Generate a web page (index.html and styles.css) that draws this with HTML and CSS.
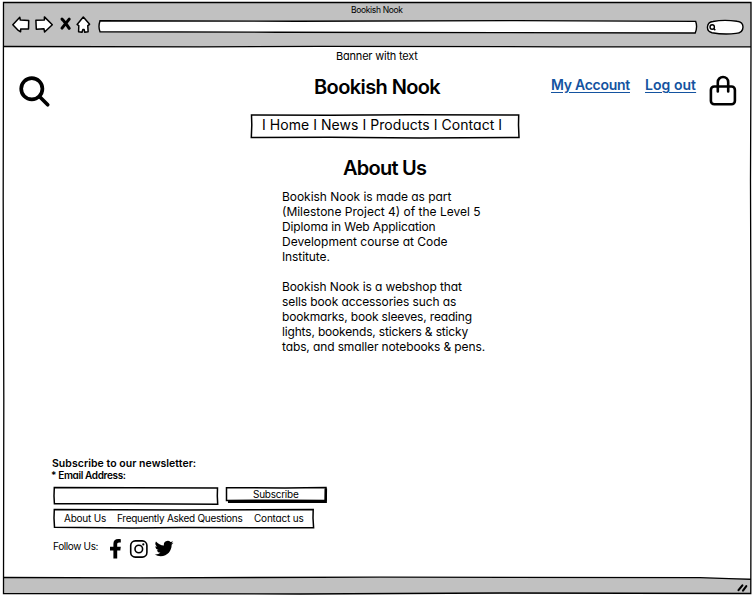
FILE: index.html
```html
<!DOCTYPE html>
<html lang="en">
<head>
<meta charset="utf-8">
<title>Bookish Nook</title>
<link rel="stylesheet" href="styles.css">
</head>
<body>
<div class="window">
  <svg class="frame" viewBox="0 0 756 600" fill="none" stroke="#000" stroke-width="1.3">
    <path d="M3.5 2.5L751 2.5L751 50L750.5 180L751.2 400L750.8 593.5L500 593L300 594L3.5 593.5L3.8 400L3.2 200Z"/>
    <path d="M3 46.5L200 46.8L320 46.3L560 46.8L751 46.8"/>
    <path d="M3 577.5L140 577.8L380 577.2L700 577.7L751 579.3"/>
  </svg>
  <header class="chrome">
    <div class="window-title"><span class="t-title">Bookish Nook</span></div>
    <div class="toolbar">
      <svg class="nav-icons" viewBox="0 0 80 20" width="80" height="20" fill="#fff" stroke="#000" stroke-width="1.5" stroke-linejoin="round">
        <path d="M.8 9.7L7.8 2.3L8.3 5L16.7 5.4L16.5 13.9L8.7 13.9L8.6 16.8L5.6 14.8Z"/>
        <path d="M23.9 5.3L32.4 5L32.4 1.9L40.3 9.7L32.6 17L32 13.8L24.3 14.2Z"/>
        <path d="M50 4.1Q53 7 57.2 13.3M57.2 4.1L50 13.1" stroke-width="3" stroke-linecap="round"/>
        <path d="M65.1 9.4L71.3 2L77.6 9.3L75.8 10.7L76.1 16.8L72.8 17.3L72.1 14.5L70.8 14.6L70 17.3L66.6 16.8L66.8 10.7Z"/>
      </svg>
      <svg class="address" viewBox="0 0 602 15" width="602" height="15" fill="#fff" stroke="#000" stroke-width="1.4">
        <path d="M3 1.7L200 2.2L420 1.6L598.7 2.4Q600.7 8 598.2 14L400 13.6L180 13.2L3 12.7Q1 8 3 1.7Z"/>
      </svg>
      <svg class="find" viewBox="0 0 38 17" width="38" height="17" fill="#fff" stroke="#000" stroke-width="1.4">
        <path d="M7 2.5Q18 .3 31 2.3Q37 3 37 8Q37 14 30 14.4Q18 16 6 13.7Q1 12.5 1.5 7.7Q2 3 7 2.5Z"/>
        <circle cx="6.2" cy="8" r="2.2"/><path d="M7.7 9.5L9.3 11.3"/>
      </svg>
    </div>
  </header>
  <main class="page">
    <p class="banner"><span class="t-banner">Banner with text</span></p>
    <div class="masthead">
      <svg class="search" viewBox="0 0 34 34" width="34" height="34" fill="none" stroke="#000" stroke-width="3.7" stroke-linecap="round">
        <circle cx="13.8" cy="13.8" r="10.6"/><path d="M21.7 21.8L29.7 29.7"/>
      </svg>
      <h1><span class="t-h1">Bookish Nook</span></h1>
      <div class="account">
        <a class="t-account">My Account</a>
        <a class="t-logout">Log out</a>
      </div>
      <svg class="bag" viewBox="0 0 28 32" width="28" height="32" fill="none" stroke="#000" stroke-width="2.6" stroke-linecap="round" stroke-linejoin="round">
        <rect x="1.9" y="11.5" width="24" height="17.8" rx="3.4"/>
        <path d="M8.8 16.5V7.2A5.2 5.2 0 0 1 19.2 7.2V16.5"/>
      </svg>
    </div>
    <nav class="menu sketch">
      <svg viewBox="0 0 270 26" preserveAspectRatio="none"><path d="M1.5 2L80 2.3L160 1.8L268.7 2L268.5 12L269 24.5L170 25L80 24.3L1.3 24.6L1.8 12Z"/></svg>
      <span class="t-menu">I Home I News I Products I Contact I</span>
    </nav>
    <h2><span class="t-h2">About Us</span></h2>
    <article class="about">
      <p><span class="l1">Bookish Nook is made as part</span>
      <span class="l2">(Milestone Project 4) of the Level 5</span>
      <span class="l3">Diploma in Web Application</span>
      <span class="l4">Development course at Code</span>
      <span class="l5">Institute.</span></p>
      <p><span class="l6">Bookish Nook is a webshop that</span>
      <span class="l7">sells book accessories such as</span>
      <span class="l8">bookmarks, book sleeves, reading</span>
      <span class="l9">lights, bookends, stickers &amp; sticky</span>
      <span class="l10">tabs, and smaller notebooks &amp; pens.</span></p>
    </article>
    <section class="newsletter">
      <div class="news-title"><span class="t-news">Subscribe to our newsletter:</span></div>
      <div class="news-label"><span class="t-email">* Email Address:</span></div>
      <div class="signup">
        <div class="field sketch"><svg viewBox="0 0 166 20" preserveAspectRatio="none"><path d="M1.3 1.6L80 1.8L164.5 2L164.3 10L164.7 18.3L80 17.8L1.4 17.7L1 10Z"/></svg></div>
        <div class="button sketch"><svg viewBox="0 0 103 18" preserveAspectRatio="none"><path d="M1.5 1.7L60 1.9L101 1.5L101 14.5L60 14.2L1.5 14.5Z"/><path class="shadow" d="M3 15.6L100.6 15.8L100.8 2.5"/></svg><span class="t-sub">Subscribe</span></div>
      </div>
      <div class="links sketch">
        <svg viewBox="0 0 262 21" preserveAspectRatio="none"><path d="M1.3 1.5L130 1.9L260.2 1.5L260 10L260.6 19.8L130 19.5L80 19.9L1.5 19.3L1 10Z"/></svg>
        <span class="t-fa">About Us</span><span class="t-fb">Frequently Asked Questions</span><span class="t-fc">Contact us</span>
      </div>
      <div class="social">
        <span class="t-follow">Follow Us:</span>
        <svg viewBox="0 0 66 20" width="66" height="20">
          <path d="M4.4 19.5V11.5H1V7.8H4.4V5C4.4 1.8 6.1.1 9.3.1C10.6.1 11.8.3 11.8.3V3.4H10.1C8.6 3.4 8.2 4.3 8.2 5.2V7.8H11.8L11.3 11.5H8.2V19.5Z"/>
          <rect x="21.7" y="1.9" width="16.2" height="16.2" rx="4.6" fill="none" stroke="#000" stroke-width="1.6"/>
          <circle cx="29.8" cy="10" r="3.8" fill="none" stroke="#000" stroke-width="1.6"/><circle cx="34.3" cy="5.4" r="1.1"/>
          <path transform="translate(45.7 .1) scale(.785)" d="M23.95 4.57a10 10 0 0 1-2.82.77 4.96 4.96 0 0 0 2.16-2.72c-.95.55-2 .96-3.12 1.18a4.92 4.92 0 0 0-8.38 4.48C7.69 8.1 4.07 6.13 1.64 3.16a4.9 4.9 0 0 0 1.52 6.57 4.9 4.9 0 0 1-2.23-.61v.06a4.92 4.92 0 0 0 3.95 4.83 5 5 0 0 1-2.21.08 4.94 4.94 0 0 0 4.6 3.42A9.87 9.87 0 0 1 0 19.54a13.99 13.99 0 0 0 7.55 2.21c9.05 0 14-7.5 14-13.98l-.02-.63a9.94 9.94 0 0 0 2.42-2.57Z"/>
        </svg>
      </div>
    </section>
  </main>
  <footer class="status">
    <svg viewBox="0 0 12 10" width="12" height="10" stroke="#000" stroke-width="2.1" stroke-linecap="round"><path d="M1.5 7.2L5.4 2.3M6 7.7L9.3 3.2"/></svg>
  </footer>
</div>
</body>
</html>
```
FILE: styles.css
```css
* { box-sizing: border-box; }
body { margin: 0; background: #fff; color: #000; font-family: Inter, "Liberation Sans", sans-serif; font-feature-settings: "cv11" 1; }
p, h1, h2 { margin: 0; }
svg { display: block; flex: none; }
span, a { white-space: nowrap; }
.window { position: relative; width: 756px; height: 600px; padding: 3px 5px 6px 4px; display: flex; flex-direction: column; overflow: hidden; }
.frame { position: absolute; inset: 0; width: 756px; height: 600px; z-index: 1; pointer-events: none; }
.chrome { height: 44px; background: #c1c1c1; }
.window-title { height: 14px; line-height: 14px; font-size: 8.5px; letter-spacing: -.33px; padding-left: 347px; }
.toolbar { display: flex; align-items: flex-start; padding-left: 8px; }
.nav-icons { margin-top: -2px; }
.address { margin: 2px 0 0 4.5px; }
.find { margin: 2px 0 0 7.5px; }
.page { flex: 1; }
.banner { height: 19px; line-height: 18px; font-size: 11px; letter-spacing: -.2px; padding-left: 332px; }
.masthead { display: flex; height: 47px; align-items: flex-start; padding: 9px 0 0 14px; }
h1 { width: 237px; margin-left: 262px; line-height: 26px; font-size: 20px; font-weight: 600; margin-top: -1px; letter-spacing: -.6px; }
.account { display: flex; gap: 15px; width: 158px; line-height: 20px; font-size: 14px; font-weight: 600; color: #1453a0; }
.account a { text-decoration: underline; text-underline-offset: 2px; }
.t-account { letter-spacing: -.27px; }
.t-logout { letter-spacing: .05px; }
.bag { margin-top: 0; }
.sketch { position: relative; }
.sketch > svg { position: absolute; inset: 0; width: 100%; height: 100%; fill: none; stroke: #000; stroke-width: 1.5; }
.sketch > span { position: relative; }
.menu { width: 270px; height: 26px; margin-left: 246px; padding-left: 12px; line-height: 23px; font-size: 14px; letter-spacing: .05px; }
.menu > svg { top: -.5px; }
h2 { margin: 16px 0 0 339px; height: 27px; line-height: 26px; font-size: 20px; font-weight: 600; letter-spacing: -.75px; }
.about { margin: 7px 0 0 278px; font-size: 12px; line-height: 15px; }
.about p { margin-bottom: 15px; }
.about span { display: block; width: max-content; }
.l1 { letter-spacing: -.04px; }
.l3 { letter-spacing: -.12px; }
.l5, .l6, .l7 { letter-spacing: -.1px; }
.l8, .l9 { letter-spacing: -.17px; }
.l10 { letter-spacing: -.12px; }
.newsletter { margin: 102px 0 0 48px; }
.news-title { height: 13px; line-height: 15px; font-size: 10.5px; font-weight: 600; letter-spacing: .04px; }
.news-label { height: 12px; line-height: 12px; font-size: 10px; font-weight: 600; letter-spacing: -.36px; margin-left: -1px; }
.signup { display: flex; gap: 6px; margin: 5px 0 0 1px; }
.field { width: 166px; height: 20px; }
.button { width: 103px; height: 18px; padding-left: 28px; line-height: 16px; font-size: 10px; letter-spacing: -.25px; }
.button .shadow { stroke-width: 2.6; }
.links { display: flex; width: 262px; height: 21px; margin: 2px 0 0 1px; padding-left: 11px; line-height: 20px; font-size: 10px; }
.t-fa { width: 53px; letter-spacing: -.22px; }
.t-fb { width: 137px; letter-spacing: -.28px; }
.t-fc { letter-spacing: -.2px; }
.social { display: flex; align-items: flex-start; margin: 10px 0 0 1px; line-height: 14px; font-size: 10px; letter-spacing: -.37px; }
.t-follow { width: 45px; }
.social svg { margin-left: 11px; }
.status { height: 16px; background: #c1c1c1; display: flex; justify-content: flex-end; padding: 5px 2px 0 0; }
```
